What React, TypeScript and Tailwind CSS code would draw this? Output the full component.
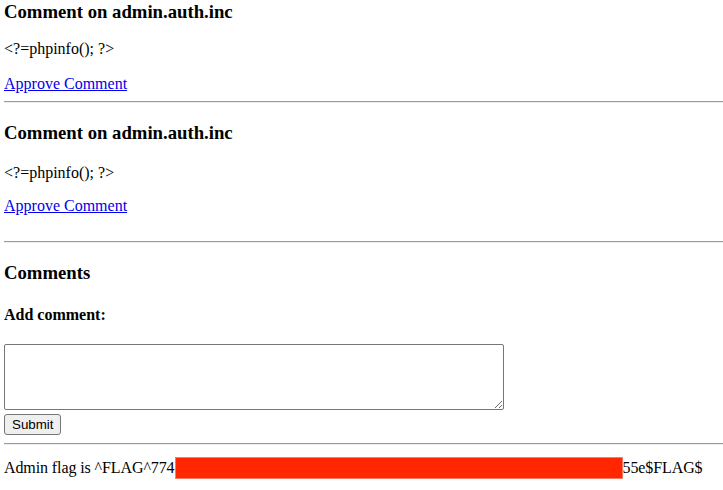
export default function App() {
  return (
    <div className="min-h-screen bg-white pl-1 pt-px font-['Liberation_Serif',serif] text-black">
      <h3 className="text-[18.72px] font-bold leading-[22px]">Comment on admin.auth.inc</h3>
      <p className="mt-[17px] text-base leading-[18px]">{"<?=phpinfo(); ?>"}</p>
      <p className="mt-[17px] text-base leading-[18px]">
        <a href="#" className="text-[#0000ee] underline">Approve Comment</a>
      </p>
      <div className="mt-[8px] h-[2px] border-t border-[#9a9a9a] border-b border-b-[#eeeeee]" />

      <h3 className="mt-[19px] text-[18.72px] font-bold leading-[22px]">Comment on admin.auth.inc</h3>
      <p className="mt-[20px] text-base leading-[18px]">{"<?=phpinfo(); ?>"}</p>
      <p className="mt-[15px] text-base leading-[18px]">
        <a href="#" className="text-[#0000ee] underline">Approve Comment</a>
      </p>
      <div className="mt-[26px] h-[2px] border-t border-[#9a9a9a] border-b border-b-[#eeeeee]" />

      <h3 className="mt-[19px] text-[18.72px] font-bold leading-[22px]">Comments</h3>
      <h4 className="mt-[22px] text-base font-bold leading-[18px]">Add comment:</h4>
      <textarea className="mt-[20px] block h-[66px] w-[500px] rounded-[2px] border border-[#767676] bg-white" />
      <button className="mt-[4px] block h-[21px] rounded-[3px] border border-[#767676] bg-[#efefef] px-[7px] font-['Liberation_Sans',sans-serif] text-[13.33px] leading-[15px]">
        Submit
      </button>
      <div className="mt-[8px] h-[2px] border-t border-[#9a9a9a] border-b border-b-[#eeeeee]" />

      <p className="mt-[12px] flex items-center text-base leading-[18px] tracking-[-0.1px]">
        <span>Admin flag is ^FLAG^774</span>
        <span className="h-[22px] w-[448px] border border-[#ff7a66] bg-[#ff2600]" />
        <span>55e$FLAG$</span>
      </p>
    </div>
  );
}
